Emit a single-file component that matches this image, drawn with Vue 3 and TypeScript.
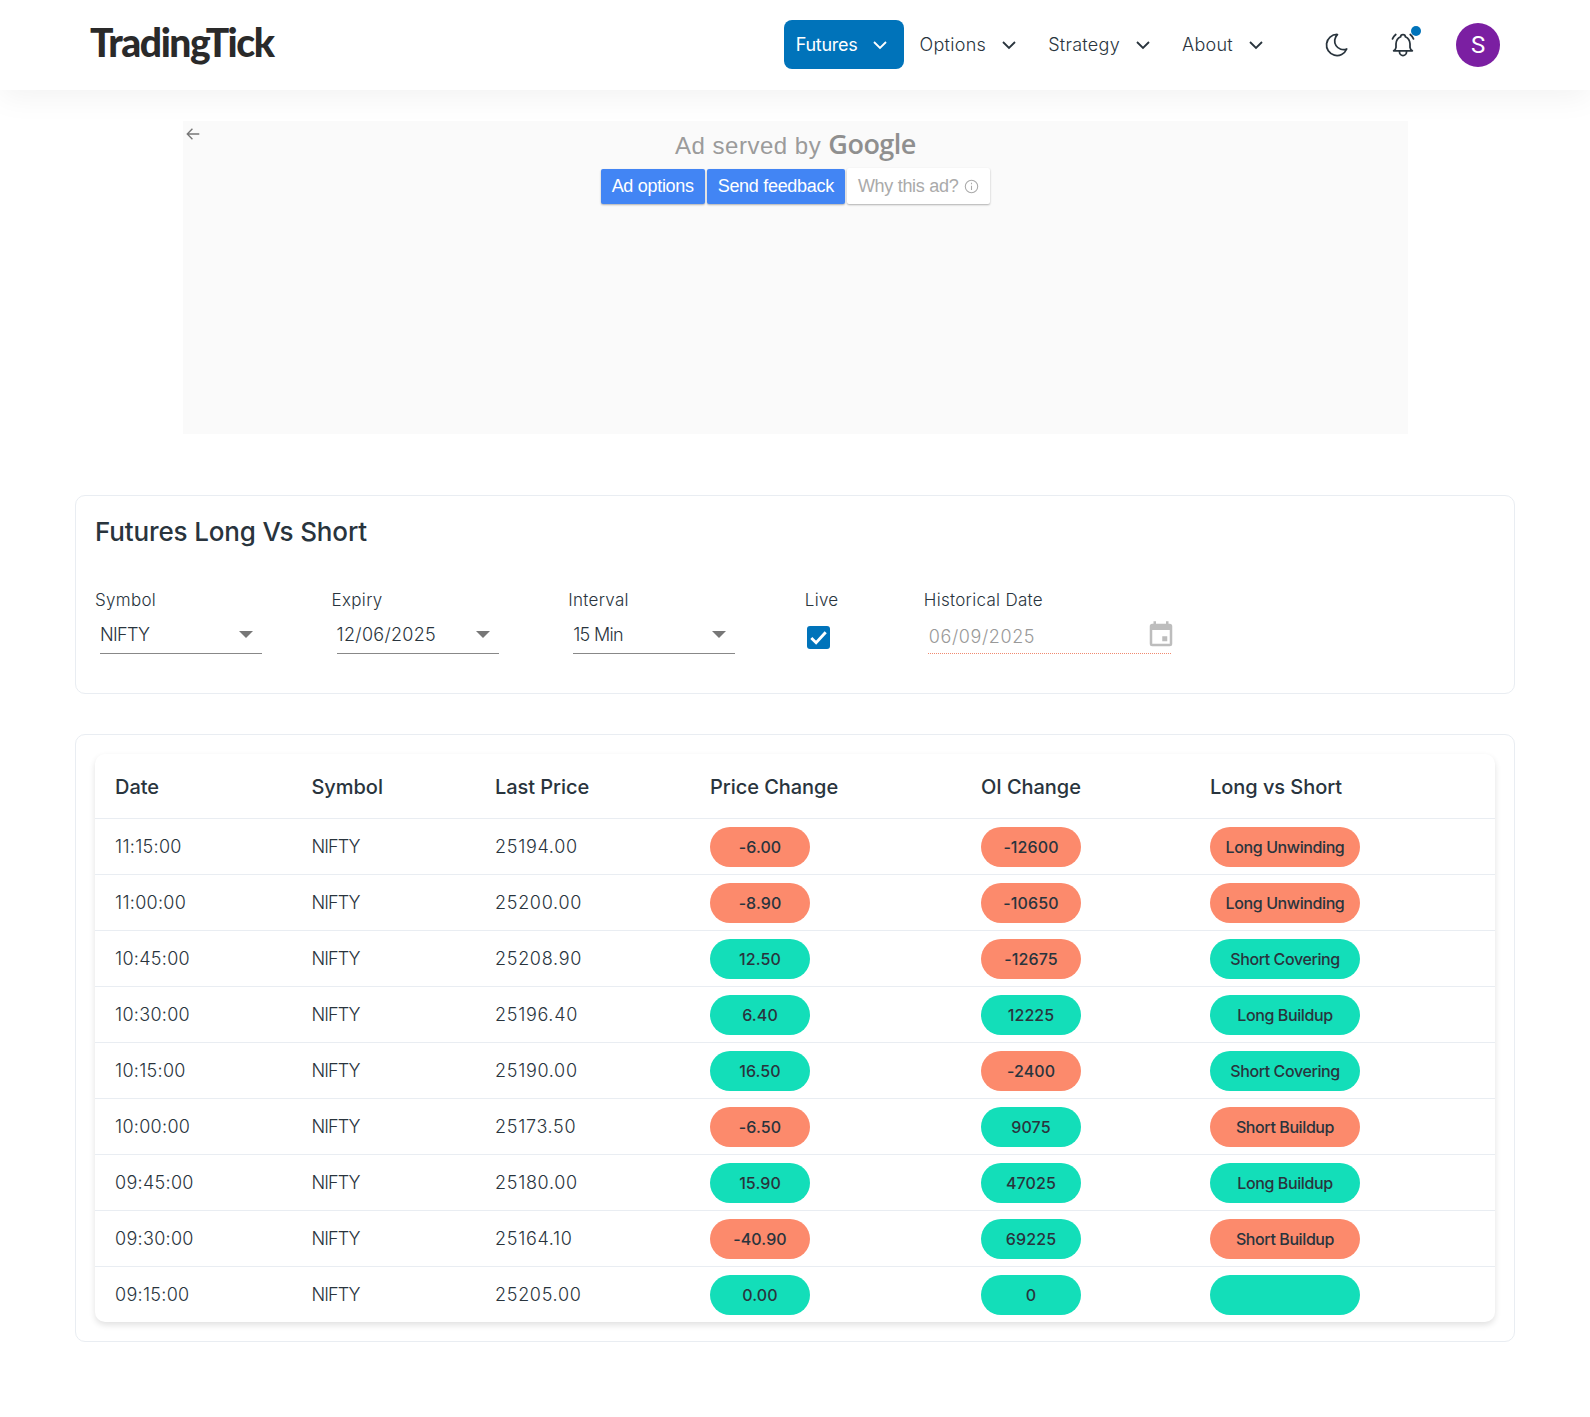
<script setup lang="ts">
interface Row {
  time: string
  last: string
  change: string
  oi: string
  trend: string
}

const rows: Row[] = [
  { time: '11:15:00', last: '25194.00', change: '-6.00', oi: '-12600', trend: 'Long Unwinding' },
  { time: '11:00:00', last: '25200.00', change: '-8.90', oi: '-10650', trend: 'Long Unwinding' },
  { time: '10:45:00', last: '25208.90', change: '12.50', oi: '-12675', trend: 'Short Covering' },
  { time: '10:30:00', last: '25196.40', change: '6.40', oi: '12225', trend: 'Long Buildup' },
  { time: '10:15:00', last: '25190.00', change: '16.50', oi: '-2400', trend: 'Short Covering' },
  { time: '10:00:00', last: '25173.50', change: '-6.50', oi: '9075', trend: 'Short Buildup' },
  { time: '09:45:00', last: '25180.00', change: '15.90', oi: '47025', trend: 'Long Buildup' },
  { time: '09:30:00', last: '25164.10', change: '-40.90', oi: '69225', trend: 'Short Buildup' },
  { time: '09:15:00', last: '25205.00', change: '0.00', oi: '0', trend: '' },
]

const menu = ['Options', 'Strategy', 'About']

const tone = (value: string) => (value.startsWith('-') ? 'red' : 'green')
const trendTone = (trend: string) => (trend === 'Long Unwinding' || trend === 'Short Buildup' ? 'red' : 'green')
</script>

<template>
  <header class="topbar">
    <div class="logo">TradingTick</div>
    <nav class="menu">
      <a class="menu-item active">
        Futures
        <svg class="chev" viewBox="0 0 24 24"><path d="M6 9l6 6 6-6" /></svg>
      </a>
      <a v-for="item in menu" :key="item" class="menu-item">
        {{ item }}
        <svg class="chev" viewBox="0 0 24 24"><path d="M6 9l6 6 6-6" /></svg>
      </a>
    </nav>
    <div class="tools">
      <svg class="tool moon" viewBox="0 0 24 24">
        <path d="M12 3c.132 0 .263 0 .393 0a7.5 7.5 0 0 0 7.92 12.446a9 9 0 1 1 -8.313 -12.454z" />
      </svg>
      <div class="bell-wrap">
        <svg class="tool" viewBox="0 0 24 24">
          <path d="M10 5a2 2 0 0 1 4 0a7 7 0 0 1 4 6v3a4 4 0 0 0 2 3h-16a4 4 0 0 0 2 -3v-3a7 7 0 0 1 4 -6" />
          <path d="M9 17v1a3 3 0 0 0 6 0v-1" />
          <path d="M21 6.727a11.05 11.05 0 0 0 -2.794 -3.727" />
          <path d="M3 6.727a11.05 11.05 0 0 1 2.792 -3.727" />
        </svg>
        <span class="dot"></span>
      </div>
      <div class="avatar">S</div>
    </div>
  </header>

  <div class="ad">
    <svg class="ad-back" viewBox="0 0 14 14"><path d="M12.500 7H2M6.500 2.500L2 7l4.500 4.500" /></svg>
    <div class="ad-title">Ad served by <span class="google">Google</span></div>
    <div class="ad-buttons">
      <span class="ad-btn">Ad options</span>
      <span class="ad-btn">Send feedback</span>
      <span class="ad-btn why">
        Why this ad?
        <svg viewBox="0 0 14 14" class="info">
          <circle cx="7" cy="7" r="5.800" />
          <path d="M7 6.200v4M7 3.600v1.400" />
        </svg>
      </span>
    </div>
  </div>

  <main class="page">
    <section class="card filters">
      <h1>Futures Long Vs Short</h1>
      <div class="filter-row">
        <div class="field">
          <label>Symbol</label>
          <div class="select"><span class="tight">NIFTY</span><i class="caret"></i></div>
        </div>
        <div class="field">
          <label>Expiry</label>
          <div class="select"><span class="loose">12/06/2025</span><i class="caret"></i></div>
        </div>
        <div class="field">
          <label>Interval</label>
          <div class="select"><span class="tight">15 Min</span><i class="caret"></i></div>
        </div>
        <div class="field live">
          <label>Live</label>
          <div class="check">
            <svg viewBox="0 0 24 24"><path d="M4.500 12.500l5 5 10-11" /></svg>
          </div>
        </div>
        <div class="field hist">
          <label>Historical Date</label>
          <div class="date">
            <span>06/09/2025</span>
            <svg viewBox="0 0 24 24">
              <path d="M19 3h-1V1h-2v2H8V1H6v2H5a2 2 0 0 0-2 2v14a2 2 0 0 0 2 2h14a2 2 0 0 0 2-2V5a2 2 0 0 0-2-2zm0 16H5V8h14v11zm-6-6h4v4h-4z" />
            </svg>
          </div>
        </div>
      </div>
    </section>

    <section class="card data">
      <table>
        <colgroup>
          <col style="width: 196.5px" />
          <col style="width: 183.5px" />
          <col style="width: 215px" />
          <col style="width: 271px" />
          <col style="width: 229px" />
          <col style="width: 305px" />
        </colgroup>
        <thead>
          <tr>
            <th>Date</th>
            <th>Symbol</th>
            <th>Last Price</th>
            <th>Price Change</th>
            <th>OI Change</th>
            <th>Long vs Short</th>
          </tr>
        </thead>
        <tbody>
          <tr v-for="row in rows" :key="row.time">
            <td class="num">{{ row.time }}</td>
            <td class="sym">NIFTY</td>
            <td class="price">{{ row.last }}</td>
            <td><span class="pill" :class="tone(row.change)">{{ row.change }}</span></td>
            <td><span class="pill" :class="tone(row.oi)">{{ row.oi }}</span></td>
            <td><span class="pill wide" :class="trendTone(row.trend)">{{ row.trend }}</span></td>
          </tr>
        </tbody>
      </table>
    </section>
  </main>
</template>

<style>
html,
body {
  background: #fff;
}
</style>

<style scoped>
.topbar {
  height: 90px;
  background: #fff;
  display: flex;
  align-items: center;
  padding: 0 90px;
  box-shadow: 0 8px 30px rgba(0, 0, 0, 0.05);
  font-family: Inter, sans-serif;
  color: #29343d;
}
.logo {
  font-family: Lato, sans-serif;
  font-weight: 900;
  font-size: 39px;
  letter-spacing: -1.45px;
  color: #2a2a2a;
  margin-right: auto;
  margin-top: -6px;
}
.menu {
  display: flex;
  align-items: center;
  font-size: 18px;
  font-weight: 300;
  letter-spacing: 0.28px;
  margin-top: -1px;
}
.menu-item {
  display: flex;
  align-items: center;
  gap: 11px;
  height: 49px;
  padding: 0 12px;
  margin-right: 3px;
  border-radius: 8px;
}
.menu-item.active {
  background: #0073ba;
  color: #fff;
  font-weight: 400;
  letter-spacing: -0.25px;
  gap: 10px;
  margin-right: 4px;
}
.chev {
  width: 24px;
  height: 24px;
  fill: none;
  stroke: currentColor;
  stroke-width: 1.8;
}
.tools {
  display: flex;
  align-items: center;
  margin-left: 40px;
}
.tool {
  width: 28px;
  height: 28px;
  fill: none;
  stroke: #29343d;
  stroke-width: 1.5;
  stroke-linecap: round;
  stroke-linejoin: round;
  display: block;
}
.moon {
  margin-right: 38px;
}
.bell-wrap {
  position: relative;
  margin-right: 39px;
}
.dot {
  position: absolute;
  right: -4px;
  top: -5px;
  width: 10px;
  height: 10px;
  border-radius: 50%;
  background: #0073ba;
}
.avatar {
  width: 44px;
  height: 44px;
  border-radius: 50%;
  background: #7b1fa2;
  color: #fff;
  display: flex;
  align-items: center;
  justify-content: center;
  font-size: 24px;
  font-family: Roboto, sans-serif;
}
.ad {
  position: relative;
  width: 1225px;
  height: 313px;
  margin: 31px 0 61px 183px;
  background: #fafafa;
  font-family: 'Liberation Sans', Arial, sans-serif;
  text-align: center;
}
.ad-back {
  position: absolute;
  left: 2px;
  top: 5px;
  width: 16px;
  height: 16px;
  fill: none;
  stroke: #777;
  stroke-width: 1.2;
}
.ad-title {
  font-size: 24px;
  letter-spacing: 0.5px;
  color: #9b9b9b;
  padding-top: 4px;
  height: 48px;
  box-sizing: border-box;
}
.google {
  font-family: 'Open Sans', sans-serif;
  font-weight: 600;
  font-size: 27px;
  letter-spacing: -0.5px;
  color: #8f8f8f;
}
.ad-buttons {
  display: flex;
  justify-content: center;
  gap: 2px;
}
.ad-btn {
  height: 35px;
  line-height: 35px;
  padding: 0 11px;
  background: #4285f4;
  color: #fff;
  font-size: 18px;
  letter-spacing: -0.3px;
  border-radius: 2px;
  box-shadow: 0 1px 2px rgba(0, 0, 0, 0.3);
}
.why {
  background: #fff;
  color: #aaa;
  display: flex;
  align-items: center;
  gap: 6px;
  height: 36px;
  margin-top: -1px;
}
.info {
  width: 15px;
  height: 15px;
  fill: none;
  stroke: #aaa;
  stroke-width: 1;
}
.page {
  padding: 0 75px 75px;
  font-family: Inter, sans-serif;
  color: #29343d;
}
.card {
  border: 1px solid #e9edf2;
  border-radius: 10px;
  padding: 19px;
  background: #fff;
}
.filters {
  height: 199px;
  box-sizing: border-box;
  margin-bottom: 40px;
}
h1 {
  margin: 0;
  font-size: 26px;
  font-weight: 500;
  letter-spacing: -0.15px;
  line-height: 34px;
  color: #29343d;
}
.filter-row {
  display: flex;
  margin-top: 39px;
}
.field {
  width: 236.6px;
}
.field.live {
  width: 119px;
}
.field.hist {
  width: 250px;
}
label {
  display: block;
  font-size: 17px;
  font-weight: 300;
  letter-spacing: 0.3px;
  line-height: 24px;
}
.select {
  display: flex;
  align-items: center;
  justify-content: space-between;
  width: 162px;
  height: 42px;
  margin-left: 5px;
  padding-top: 3px;
  box-sizing: border-box;
  border-bottom: 1px solid #888;
  padding-right: 9px;
  font-size: 18px;
  font-weight: 300;
}
.tight {
  letter-spacing: -0.7px;
}
.loose {
  letter-spacing: 0.3px;
}
.caret {
  width: 0;
  height: 0;
  border-left: 7px solid transparent;
  border-right: 7px solid transparent;
  border-top: 7px solid #777;
}
.check {
  width: 23px;
  height: 23px;
  margin: 14px 0 0 2px;
  background: #0073ba;
  border-radius: 3px;
}
.check svg {
  display: block;
  fill: none;
  stroke: #fff;
  stroke-width: 3;
}
.date {
  display: flex;
  align-items: center;
  justify-content: space-between;
  width: 243px;
  height: 42px;
  margin-left: 4px;
  padding-top: 7px;
  box-sizing: border-box;
  padding-left: 1px;
  border-bottom: 1px dotted #f08a70;
  font-size: 18px;
  font-weight: 300;
  letter-spacing: 0.6px;
  color: #999;
}
.date svg {
  width: 30px;
  height: 30px;
  fill: #bdbdbd;
  margin: -2px -5px 0 0;
}
.data {
  height: 608px;
  box-sizing: border-box;
}
table {
  width: 1400px;
  table-layout: fixed;
  border-collapse: separate;
  border-spacing: 0;
  border-radius: 10px;
  box-shadow: 0 3px 6px rgba(0, 0, 0, 0.12);
}
th {
  height: 65px;
  padding: 2px 20px 0;
  box-sizing: border-box;
  text-align: left;
  font-size: 20px;
  font-weight: 500;
  letter-spacing: -0.05px;
  border-bottom: 1px solid #e9edf2;
}
td {
  height: 55px;
  padding: 0 20px;
  font-size: 18px;
  font-weight: 300;
  border-bottom: 1px solid #e9edf2;
}
td.num {
  letter-spacing: 0.3px;
}
td.sym {
  letter-spacing: -0.95px;
}
td.price {
  letter-spacing: 0.7px;
}
tr:last-child td {
  border-bottom: 0;
}
.pill {
  display: flex;
  align-items: center;
  justify-content: center;
  width: 100px;
  height: 40px;
  border-radius: 20px;
  font-size: 16px;
  font-weight: 450;
  letter-spacing: 0.1px;
}
.pill.wide {
  width: 150px;
  letter-spacing: -0.4px;
}
.red {
  background: #fc8a6c;
}
.green {
  background: #13deb9;
}
</style>
